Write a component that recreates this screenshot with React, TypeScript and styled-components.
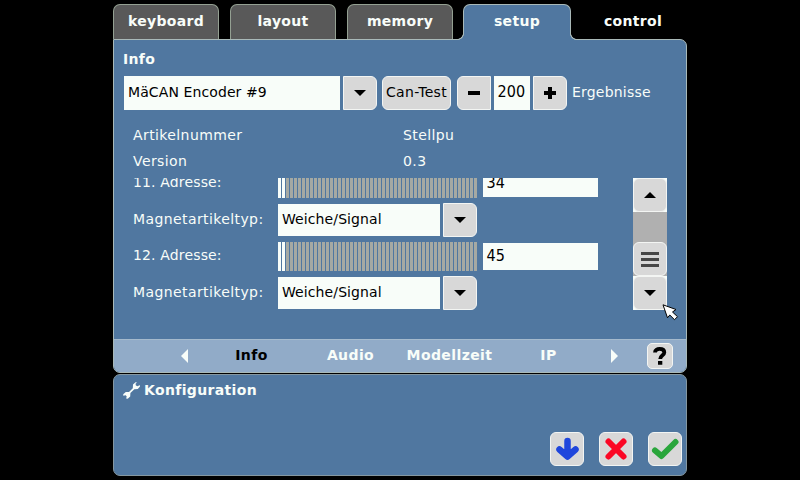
import React from "react";
import styled, { createGlobalStyle, css } from "styled-components";

const blue = "#5077a0";
const white = "#f8fdf9";
const edge = "#a9b9b8";
const face = "#d8d8d8";

const Global = createGlobalStyle`
  * { box-sizing: border-box; }
  body { margin: 0; background: #000; }
`;

const Screen = styled.div`
  width: 800px;
  height: 480px;
  padding: 4px 113px 4px;
  overflow: hidden;
  position: relative;
  background: #000;
  color: ${white};
  font: 14px/20px "DejaVu Sans", sans-serif;
  white-space: nowrap;
`;

const TabRow = styled.nav`
  display: flex;
  gap: 11px;
  height: 35px;
`;

const flare = css`
  content: "";
  position: absolute;
  bottom: 0;
  width: 7px;
  height: 7px;
`;

const Tab = styled.div<{ $kind?: "active" | "plain" }>`
  width: 106px;
  height: 35px;
  padding-top: 6px;
  text-align: center;
  font-weight: bold;
  letter-spacing: 0.3px;
  border: 1px solid #94a092;
  border-bottom: none;
  border-radius: 7px 7px 0 0;
  background: #595959;
  ${(p) => p.$kind === "plain" && css`
    background: none;
    border-color: transparent;
    width: 104px;
  `}
  ${(p) => p.$kind === "active" && css`
    width: 108px;
    margin: 0 -1px;
    height: 36px;
    position: relative;
    background: ${blue};
    border-color: ${edge};
    &::before {
      ${flare}
      left: -7px;
      background: radial-gradient(circle at 0 0, #000 5.6px, ${edge} 6.2px, ${edge} 6.8px, ${blue} 7.4px);
    }
    &::after {
      ${flare}
      right: -7px;
      background: radial-gradient(circle at 100% 0, #000 5.6px, ${edge} 6.2px, ${edge} 6.8px, ${blue} 7.4px);
    }
  `}
`;

const Main = styled.main`
  height: 334px;
  border: 1px solid ${edge};
  border-radius: 0 7px 7px 7px;
  background: ${blue};
  overflow: hidden;
  display: flex;
  flex-direction: column;
`;

const Title = styled.h1`
  margin: 9px 0 7px 9px;
  font-size: 14px;
  line-height: 20px;
  letter-spacing: 0.3px;
`;

const ControlRow = styled.div`
  display: flex;
  align-items: center;
  height: 34px;
  margin-left: 10px;
`;

const Field = styled.div<{ $w: number; $h: number }>`
  width: ${(p) => p.$w}px;
  height: ${(p) => p.$h}px;
  padding: 0 0 2px 4px;
  display: flex;
  align-items: center;
  background: ${white};
  color: #000;
  letter-spacing: 0.1px;
`;

const NumberField = styled(Field)`
  font: 16px/20px "DejaVu Sans Condensed", "DejaVu Sans", sans-serif;
  font-stretch: condensed;
  padding-left: 3.500px;
`;

const shapes = {
  right: "0 6px 6px 0",
  left: "6px 0 0 6px",
  all: "6px",
};

const Button = styled.button<{ $w?: number; $shape?: keyof typeof shapes }>`
  width: ${(p) => p.$w ?? 34}px;
  height: 34px;
  flex: none;
  padding: 0;
  display: flex;
  align-items: center;
  justify-content: center;
  border: 1px solid #f3f5f3;
  border-radius: ${(p) => shapes[p.$shape ?? "all"]};
  background: ${face};
  color: #000;
  font: inherit;
`;

const TestButton = styled(Button)`
  margin: 0 6px 0 5px;
  padding-bottom: 2px;
  letter-spacing: 0.3px;
`;

const AfterField = styled(Button)`
  margin-left: 3px;
`;

const BeforeField = styled(Button)`
  margin-right: 3px;
`;

const Caption = styled.span`
  margin: -2px 0 0 5px;
  letter-spacing: 0.2px;
`;

const Facts = styled.dl`
  margin: 15px 0 0 19px;
  display: grid;
  grid-template-columns: 270px auto;
  grid-auto-rows: 26px;
  letter-spacing: 0.4px;
  dt, dd { margin: 0; }
`;

const ScrollArea = styled.section`
  display: flex;
  justify-content: space-between;
  height: 132px;
  width: 534px;
  margin: 1px 0 0 19px;
`;

const Viewport = styled.div`
  width: 470px;
  overflow: hidden;
`;

const Rows = styled.div`
  margin-top: -9px;
  display: flex;
  flex-direction: column;
  gap: 5px;
`;

const Row = styled.div<{ $tall?: boolean }>`
  display: flex;
  align-items: center;
  height: ${(p) => (p.$tall ? 34 : 29)}px;
`;

const Label = styled.label`
  width: 145px;
  padding-bottom: 2px;
  letter-spacing: 0.4px;
`;

const AddressLabel = styled(Label)`
  padding-bottom: 3px;
  letter-spacing: 0.15px;
`;

const Meter = styled.div`
  width: 199px;
  height: 29px;
  margin-right: 6px;
  display: flex;
  gap: 1px;
`;

const Tick = styled.i<{ $on: boolean }>`
  width: 3px;
  background: ${(p) => (p.$on ? white : "#a5a9a3")};
`;

const Scrollbar = styled.div`
  width: 34px;
  background: #b0b0b0;
`;

const Corner = styled.div`
  background: ${white};
`;

const Track = styled.div`
  height: 30px;
`;

const Pager = styled.footer`
  margin-top: auto;
  height: 33px;
  display: flex;
  align-items: center;
  border-top: 1px solid #a5bacd;
  background: #91abc8;
  padding-left: 67px;
  font-weight: bold;
`;

const Page = styled.span<{ $active?: boolean }>`
  width: 99px;
  margin-top: -2px;
  text-align: center;
  letter-spacing: 0.4px;
  color: ${(p) => (p.$active ? "#000" : white)};
`;

const Prev = styled.svg`
  margin-right: 14px;
`;

const Next = styled.svg`
  margin-left: 13px;
`;

const Help = styled(Button)`
  width: 26px;
  height: 26px;
  margin-left: 29px;
  border-radius: 5px;
`;

const Config = styled.section`
  height: 102px;
  margin-top: 1px;
  padding: 5px 4px 8px 9px;
  border: 1px solid #8597a0;
  border-radius: 7px;
  background: ${blue};
  display: flex;
  flex-direction: column;
  justify-content: space-between;
`;

const ConfigHead = styled.h2`
  margin: 0;
  display: flex;
  align-items: center;
  gap: 4px;
  font-size: 14px;
  line-height: 20px;
  letter-spacing: 0.35px;
`;

const Actions = styled.div`
  display: flex;
  justify-content: flex-end;
  gap: 15px;
  margin-bottom: 1px;
`;

const Pointer = styled.svg`
  position: absolute;
  left: 662px;
  top: 304px;
`;

const Down = () => (
  <svg width="12" height="6" viewBox="0 0 12 6"><path d="M0 0h12L6 6z" /></svg>
);
const Up = () => (
  <svg width="12" height="6" viewBox="0 0 12 6"><path d="M0 6h12L6 0z" /></svg>
);

const Address = ({ label, value }: { label: string; value: string }) => (
  <Row>
    <AddressLabel>{label}</AddressLabel>
    <Meter>
      {Array.from({ length: 50 }, (_, i) => <Tick key={i} $on={i < 2} />)}
    </Meter>
    <NumberField $w={115} $h={27}>{value}</NumberField>
  </Row>
);

const Kind = () => (
  <Row $tall>
    <Label>Magnetartikeltyp:</Label>
    <Field $w={162} $h={32}>Weiche/Signal</Field>
    <AfterField $shape="right"><Down /></AfterField>
  </Row>
);

export default function App() {
  return (
    <Screen>
      <Global />
      <TabRow>
        <Tab>keyboard</Tab>
        <Tab>layout</Tab>
        <Tab>memory</Tab>
        <Tab $kind="active">setup</Tab>
        <Tab $kind="plain">control</Tab>
      </TabRow>
      <Main>
        <Title>Info</Title>
        <ControlRow>
          <Field $w={216} $h={34}>MäCAN Encoder #9</Field>
          <AfterField $shape="right"><Down /></AfterField>
          <TestButton $w={69}>Can-Test</TestButton>
          <BeforeField $shape="left">
            <svg width="12" height="4"><path d="M0 0h12v4H0z" /></svg>
          </BeforeField>
          <NumberField $w={36} $h={34}>200</NumberField>
          <AfterField $shape="right">
            <svg width="12" height="12"><path d="M4 0h4v4h4v4H8v4H4V8H0V4h4z" /></svg>
          </AfterField>
          <Caption>Ergebnisse</Caption>
        </ControlRow>
        <Facts>
          <dt>Artikelnummer</dt><dd>Stellpu</dd>
          <dt>Version</dt><dd>0.3</dd>
        </Facts>
        <ScrollArea>
          <Viewport>
            <Rows>
              <Address label="11. Adresse:" value="34" />
              <Kind />
              <Address label="12. Adresse:" value="45" />
              <Kind />
            </Rows>
          </Viewport>
          <Scrollbar>
            <Corner><Button><Up /></Button></Corner>
            <Track />
            <Button>
              <svg width="18" height="15"><path d="M0 0h18v3H0zM0 6h18v3H0zM0 12h18v3H0z" fill="#474747" /></svg>
            </Button>
            <Corner><Button><Down /></Button></Corner>
          </Scrollbar>
        </ScrollArea>
        <Pager>
          <Prev width="7" height="14"><path d="M7 0v14L0 7z" fill={white} /></Prev>
          <Page $active>Info</Page>
          <Page>Audio</Page>
          <Page>Modellzeit</Page>
          <Page>IP</Page>
          <Next width="7" height="14"><path d="M0 0v14l7-7z" fill={white} /></Next>
          <Help>
            <svg width="14" height="18" viewBox="0 0 14 18">
              <path d="M2 5.600C2 3 4.200 1.900 6.600 1.900c2.900 0 4.700 1.300 4.700 3.500C11.300 8.200 7.200 8.300 7.200 12" fill="none" stroke="#000" strokeWidth="3.800" />
              <path d="M5 14h4.300v3.800H5z" />
            </svg>
          </Help>
        </Pager>
      </Main>
      <Config>
        <ConfigHead>
          <svg width="17" height="17" viewBox="0 0 17 17" fill={white}>
            <path d="M12.500 .3 10 2.500 9.800 6.200 6 9.900l-3.200 0L.2 12.300l.1 1.500 2.400-.5 1 1.100-.6 2.200 1.600.1 2.500-2.300.2-3.300 3.900-3.900 3.500-.1 2.200-2.500-.3-1.600-2 1.300-1.800-.9-.4-1.600 1.500-1.300z" />
          </svg>
          Konfiguration
        </ConfigHead>
        <Actions>
          <Button>
            <svg width="24" height="24" fill="none" stroke="#1f46dc" strokeWidth="6.500" strokeLinecap="round" strokeLinejoin="round">
              <path d="M12.500 4v14M4.500 12.500l8 7 8-7" />
            </svg>
          </Button>
          <Button>
            <svg width="24" height="24" fill="none" stroke="#fb0725" strokeWidth="6" strokeLinecap="round">
              <path d="M4.500 4.500l15 15M19.500 4.500l-15 15" />
            </svg>
          </Button>
          <Button>
            <svg width="28" height="24" fill="none" stroke="#2aa63c" strokeWidth="6" strokeLinecap="round" strokeLinejoin="round">
              <path d="M4 13.500l6.500 5.500L24.500 5" />
            </svg>
          </Button>
        </Actions>
      </Config>
      <Pointer width="17" height="17" viewBox="0 0 17 17">
        <path d="M1 .800 14 5.500 10.500 8 15.500 12.700 12.500 15.700 7.800 11 5.500 13.800z" fill="#fff" stroke="#000" strokeWidth="1" />
      </Pointer>
    </Screen>
  );
}
